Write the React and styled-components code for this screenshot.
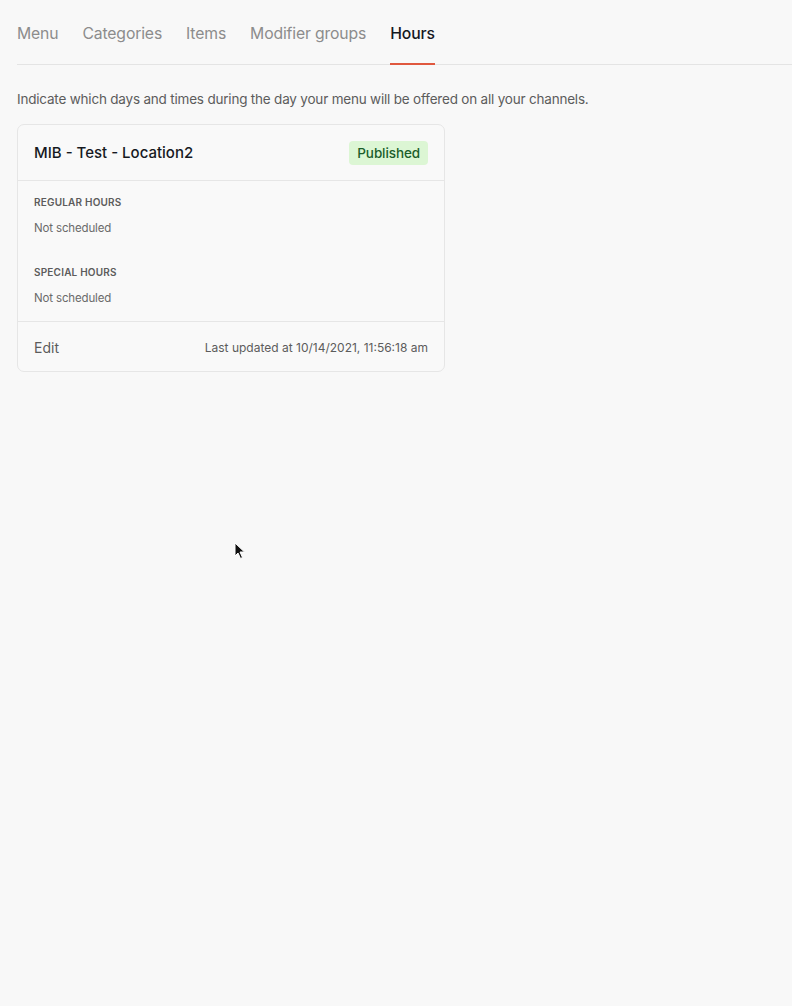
import React from "react"
import styled, { createGlobalStyle } from "styled-components"

const GlobalStyle = createGlobalStyle`
  html, body {
    margin: 0;
    padding: 0;
    background: #f8f8f8;
  }
  body {
    font-family: Inter, "Liberation Sans", sans-serif;
    -webkit-font-smoothing: antialiased;
  }
`;

const Page = styled.div`
  position: relative;
  min-height: 1006px;
  padding-left: 17px;
  box-sizing: border-box;
`;
const Tabs = styled.nav`
  display: flex;
  gap: 24px;
  border-bottom: 1px solid #e4e4e4;
`;
const Tab = styled.a`
  font-size: 15.75px;
  letter-spacing: -0.15px;
  line-height: 24px;
  padding: 22px 0 17px;
  margin-bottom: -1px;
  color: ${props => props.active ? "#16191f" : "#8c8c8c"};
  border-bottom: 2px solid ${props => props.active ? "#e0583f" : "transparent"};
  font-weight: ${props => props.active ? 500 : 400};
  cursor: pointer;
`;
const Intro = styled.p`
  margin: 24px 0 15px;
  font-size: 13.5px;
  letter-spacing: -0.2px;
  line-height: 20px;
  color: #5c5c5c;
`;
const Card = styled.section`
  width: 428px;
  box-sizing: border-box;
  border: 1px solid #e6e6e6;
  border-radius: 7px;
  background: #f9f9f9;
`;
const CardHeader = styled.div`
  display: flex;
  justify-content: space-between;
  align-items: center;
  padding: 16px 16px 15px;
  border-bottom: 1px solid #e6e6e6;
`;
const Title = styled.h2`
  margin: 0;
  font-size: 15px;
  line-height: 24px;
  font-weight: 500;
  color: #16191f;
`;
const Badge = styled.span`
  font-size: 13.5px;
  letter-spacing: -0.1px;
  line-height: 24px;
  padding: 0 8px;
  border-radius: 4px;
  background: #dcf6d4;
  color: #1b5e2b;
  font-weight: 500;
`;
const Body = styled.div`
  display: flex;
  flex-direction: column;
  gap: 27px;
  padding: 13px 16px 14px;
  border-bottom: 1px solid #e6e6e6;
`;
const Section = styled.div`
  display: flex;
  flex-direction: column;
  gap: 9px;
`;
const Label = styled.h3`
  margin: 0;
  font-size: 10px;
  line-height: 16px;
  font-weight: 600;
  letter-spacing: 0.02em;
  text-transform: uppercase;
  color: #5c5c5c;
`;
const Value = styled.span`
  font-size: 11.5px;
  letter-spacing: -0.15px;
  line-height: 18px;
  color: #6a6a6a;
`;
const Footer = styled.div`
  display: flex;
  justify-content: space-between;
  align-items: center;
  padding: 16px 16px 13px;
`;
const EditLink = styled.a`
  font-size: 14px;
  line-height: 20px;
  color: #5c5c5c;
  cursor: pointer;
`;
const Updated = styled.span`
  font-size: 12px;
  line-height: 18px;
  color: #5c5c5c;
`;
const Pointer = styled.svg`
  position: absolute;
  left: 234px;
  top: 542px;
`;

const tabs = ["Menu", "Categories", "Items", "Modifier groups", "Hours"]

export default function App() {
  return (
    <Page>
      <GlobalStyle />
      <Tabs>
        {tabs.map(t => <Tab key={t} active={t === "Hours"}>{t}</Tab>)}
      </Tabs>
      <Intro>Indicate which days and times during the day your menu will be offered on all your channels.</Intro>
      <Card>
        <CardHeader>
          <Title>MIB - Test - Location2</Title>
          <Badge>Published</Badge>
        </CardHeader>
        <Body>
          <Section>
            <Label>Regular hours</Label>
            <Value>Not scheduled</Value>
          </Section>
          <Section>
            <Label>Special hours</Label>
            <Value>Not scheduled</Value>
          </Section>
        </Body>
        <Footer>
          <EditLink>Edit</EditLink>
          <Updated>Last updated at 10/14/2021, 11:56:18 am</Updated>
        </Footer>
      </Card>
      <Pointer width="12" height="18" viewBox="0 0 12 18">
        <path d="M1 1 L1 14 L4 11 L6.5 16.5 L8.5 15.5 L6 10 L10.5 10 Z" fill="#111" stroke="#fff" strokeWidth="1" />
      </Pointer>
    </Page>
  )
}
